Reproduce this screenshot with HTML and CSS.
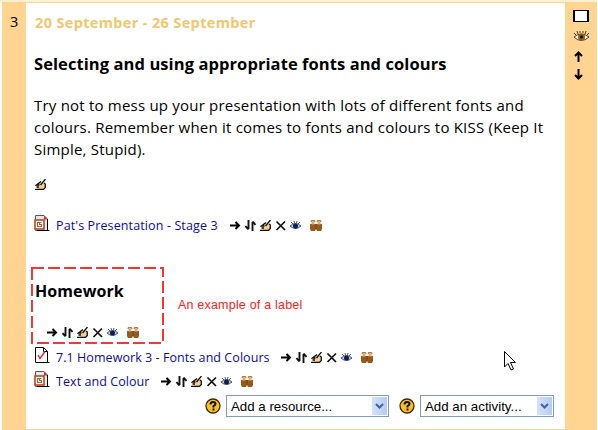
FILE: index.html
```
<!DOCTYPE html>
<html lang="en">
<head>
<meta charset="utf-8">
<title>Course topic</title>
<link rel="stylesheet" href="styles.css">
</head>
<body>
<svg class="defs" aria-hidden="true">
  <symbol id="right" viewBox="0 0 11 11"><path d="M0 5.5H9M5.5 2L9 5.5L5.5 9" fill="none" stroke="#000" stroke-width="2"/></symbol>
  <symbol id="move" viewBox="0 0 11 11"><path d="M3.500 0V9M0.500 6L3.500 9.500M7.500 11V2M7.500 1.500L10.500 5" fill="none" stroke="#111" stroke-width="1.900"/></symbol>
  <symbol id="edit" viewBox="0 0 11 11"><path d="M1 6L5 3L8 3L10 5V10H3Z" fill="#f2cf9a"/><path d="M10.500 0L5.500 6M6 2.500L1.500 6H4.500M1.500 8H4M0 10.500H8.500L10.300 8.500V5L9 4" fill="none" stroke="#111" stroke-width="1.300"/></symbol>
  <symbol id="delete" viewBox="0 0 11 11"><path d="M1.500 1.500L10 10M10 1.500L1.500 10" fill="none" stroke="#111" stroke-width="1.700"/></symbol>
  <symbol id="eye" viewBox="0 0 11 11"><path d="M0 6Q5.500 1 11 6Q5.500 11 0 6Z" fill="#bfcbe0" stroke="#26304c" stroke-width=".8"/><circle cx="5.500" cy="6" r="2.500" fill="#0c1c58"/><path d="M1 2L3 4M4 1L4.500 3M7 1L6.500 3M10 2L8 4" stroke="#26304c" stroke-width=".8"/></symbol>
  <symbol id="group" viewBox="0 0 12 11"><path d="M0 4H12V9L11 11H7L6 9L5 11H1L0 9Z" fill="#96591f"/><path d="M1.500 1H4.500V4.500H1.500ZM7.500 1H10.500V4.500H7.500Z" fill="#e3ae72"/><path d="M1.200 2V0.500H4.800V2M7.200 2V0.500H10.800V2" fill="none" stroke="#8a5a2a" stroke-width=".8"/><path d="M6 4V9" stroke="#6d3f12" stroke-width=".7"/></symbol>
  <symbol id="slides" viewBox="0 0 16 17"><path d="M1.500 0.500H10L13.500 4V15.500H1.500Z" fill="#dfeaf2" stroke="#555"/><path d="M10 0.500V4.500H13.500Z" fill="#d22"/><path d="M13.500 4V15.500M3 15.500H15.500" fill="none" stroke="#000"/><rect x="1" y="5" width="9" height="9" fill="#fff" stroke="#b64a22" stroke-width="1.600"/><path d="M7.500 7.500H3.500V11.500H7.500V9.500H5.500V7.500" fill="none" stroke="#c0562c" stroke-width="1.100"/></symbol>
  <symbol id="task" viewBox="0 0 16 17"><path d="M1.500 0.500H9.500L13.500 4.500V15.500H1.500Z" fill="#fff" stroke="#000"/><path d="M9.500 0.500V4.500H13.500M13 15.500H15.500" fill="none" stroke="#000"/><path d="M4 8L6 11.500L11 4.500" fill="none" stroke="#d8232b" stroke-width="1.400"/></symbol>
  <symbol id="help" viewBox="0 0 16 16"><circle cx="8" cy="8" r="7" fill="#f8bf29" stroke="#3b2c08" stroke-width="1.300"/><path d="M5.500 6.500Q5.500 4 8 4Q10.500 4 10.500 6Q10.500 7 8.500 8.200V9.500M8.500 10.500V12.500" fill="none" stroke="#111" stroke-width="2"/></symbol>
  <symbol id="bigeye" viewBox="0 0 17 13"><path d="M1 7Q8 1 16 7Q8 14 1 7Z" fill="#fff" stroke="#3b2410" stroke-width=".9"/><circle cx="8.500" cy="7" r="3.500" fill="#8a6014"/><circle cx="8.500" cy="7" r="1.400" fill="#000"/><path d="M1 3L3 5M4 1L5 4M7 1V3M10 1V3M13 1L12 4M16 3L14 5" stroke="#3b2410" stroke-width=".9"/></symbol>
  <symbol id="up" viewBox="0 0 9 11"><path d="M4.500 11V1.500M1 5L4.500 1.500L8 5" fill="none" stroke="#000" stroke-width="2"/></symbol>
</svg>
<div class="topic">
  <div class="number">3</div>
  <main class="content">
    <div class="date">20 September - 26 September</div>
    <h2 class="title">Selecting and using appropriate fonts and colours</h2>
    <p class="summary">Try not to mess up your presentation with lots of different fonts and<br>colours. Remember when it comes to fonts and colours to KISS (Keep It<br>Simple, Stupid).</p>
    <div class="edit-row"><svg class="ic"><use href="#edit"/></svg></div>
    <div class="item"><svg class="file"><use href="#slides"/></svg><a class="l1">Pat's Presentation - Stage 3</a><span class="tools"><svg class="ic"><use href="#right"/></svg><svg class="ic"><use href="#move"/></svg><svg class="ic"><use href="#edit"/></svg><svg class="ic"><use href="#delete"/></svg><svg class="ic"><use href="#eye"/></svg><svg class="ic grp"><use href="#group"/></svg></span></div>
    <div class="label-row">
      <section class="label-box">
        <svg class="dash" viewBox="0 0 133 77"><path d="M1 1H132V76H1Z"/></svg>
        <h2 class="title">Homework</h2>
        <span class="tools"><svg class="ic"><use href="#right"/></svg><svg class="ic"><use href="#move"/></svg><svg class="ic"><use href="#edit"/></svg><svg class="ic"><use href="#delete"/></svg><svg class="ic"><use href="#eye"/></svg><svg class="ic grp"><use href="#group"/></svg></span>
      </section>
      <span class="note">An example of a label</span>
    </div>
    <div class="item"><svg class="file"><use href="#task"/></svg><a class="l2">7.1 Homework 3 - Fonts and Colours</a><span class="tools"><svg class="ic"><use href="#right"/></svg><svg class="ic"><use href="#move"/></svg><svg class="ic"><use href="#edit"/></svg><svg class="ic"><use href="#delete"/></svg><svg class="ic"><use href="#eye"/></svg><svg class="ic grp"><use href="#group"/></svg></span></div>
    <div class="item"><svg class="file"><use href="#slides"/></svg><a class="l3">Text and Colour</a><span class="tools"><svg class="ic"><use href="#right"/></svg><svg class="ic"><use href="#move"/></svg><svg class="ic"><use href="#edit"/></svg><svg class="ic"><use href="#delete"/></svg><svg class="ic"><use href="#eye"/></svg><svg class="ic grp"><use href="#group"/></svg></span></div>
    <div class="adders">
      <svg class="help"><use href="#help"/></svg>
      <div class="select resource"><span>Add a resource...</span><i><svg viewBox="0 0 9 7"><path d="M1 1L4.500 4.500L8 1"/></svg></i></div>
      <svg class="help"><use href="#help"/></svg>
      <div class="select activity"><span>Add an activity...</span><i><svg viewBox="0 0 9 7"><path d="M1 1L4.500 4.500L8 1"/></svg></i></div>
    </div>
  </main>
  <aside class="side">
    <div class="box"></div>
    <svg class="bigeye"><use href="#bigeye"/></svg>
    <svg class="arrow"><use href="#up"/></svg>
    <svg class="arrow down"><use href="#up"/></svg>
  </aside>
</div>
<svg class="cursor" viewBox="0 0 13 21"><path d="M1.500 1.500V17L5 13.500L8 20L10.500 19L7.500 12.500H12.500Z" fill="#fff" stroke="#000"/></svg>
</body>
</html>
```
FILE: styles.css
```
* { box-sizing: border-box; }
body { margin: 0; width: 598px; height: 430px; overflow: hidden; background: #fff; font-family: "Open Sans", "Noto Sans", sans-serif; color: #000; }
svg { display: block; flex: none; }
.defs { position: absolute; width: 0; height: 0; }
.topic { display: grid; grid-template-columns: 24px 539px 32px; height: 430px; padding-left: 2px; border-top: 2px solid #ffefd2; background: #fff; }
.number { background: #ffd591; font-size: 14.500px; line-height: 20px; padding: 10px 0 0 8px; }
.content { border-top: 1px solid #ffd591; border-bottom: 1px solid #eedd9c; padding-left: 8px; height: 428px; }
.side { background: #ffd591; padding: 8px 0 0 8px; }
.date { height: 20px; line-height: 20px; margin-top: 10px; padding-left: 1px; font-size: 14.500px; font-weight: 700; color: #f3c66f; letter-spacing: .35px; white-space: nowrap; }
.title { margin: 0; font-size: 16.500px; line-height: 24px; font-weight: 700; letter-spacing: .08px; white-space: nowrap; }
.content > .title { margin-top: 19px; }
.summary { margin: 18px 0 0; height: 67px; font-size: 15px; letter-spacing: .21px; line-height: 22px; white-space: nowrap; }
.edit-row { padding: 18px 0 0 1px; height: 52px; }
.ic { width: 11px; height: 11px; }
.item { display: flex; align-items: center; height: 24px; font-size: 12.500px; letter-spacing: .06px; white-space: nowrap; }
.file { width: 16px; height: 17px; margin: -4px 6px 0 0; }
.item a { color: #0c0ca0; }
.tools { display: flex; gap: 4px; }
.grp { width: 12px; margin-left: 5px; }
.l1 { width: 174px; letter-spacing: .12px; }
.l2 { width: 225px; }
.l3 { width: 105px; }
.label-row { display: flex; margin: 30px 0 0 -3px; height: 77px; }
.label-box { position: relative; width: 133px; height: 77px; padding: 12px 0 0 4px; }
.label-box .title { font-size: 16px; }
.label-box .tools { margin: 24px 0 0 12px; }
.dash { position: absolute; left: 0; top: 0; width: 133px; height: 77px; }
.dash path { fill: none; stroke: #f33; stroke-width: 2; stroke-dasharray: 12 4; }
.note { margin: 30px 0 0 14px; font: 12.500px/16px "Liberation Sans", sans-serif; letter-spacing: .2px; color: #f22; white-space: nowrap; }
.label-row + .item { margin-top: 1px; }
.adders { display: flex; align-items: center; padding: 2px 11px 0 0; justify-content: flex-end; }
.help { width: 16px; height: 16px; margin-right: 5px; }
.select { height: 22px; border: 1px solid #7f9db9; display: flex; justify-content: space-between; padding: 1px 1px 1px 4px; font: 13.300px/19px "Liberation Sans", sans-serif; white-space: nowrap; }
.resource { width: 163px; margin-right: 10px; }
.activity { width: 134px; }
.select i { width: 15px; height: 18px; background: linear-gradient(90deg, #d3e1fd, #b5cbf7); display: grid; place-items: center; }
.select i svg { width: 9px; height: 7px; }
.select i path { fill: none; stroke: #4d6185; stroke-width: 2; }
.box { width: 16px; height: 12px; background: #fff; border: 2px solid #000; border-width: 1px 2px; }
.bigeye { width: 17px; height: 13px; margin-top: 8px; }
.arrow { width: 9px; height: 11px; margin: 8px 0 0 1px; }
.down { transform: scaleY(-1); margin-top: 7px; }
.cursor { position: absolute; left: 503px; top: 350px; width: 13px; height: 21px; }
```
